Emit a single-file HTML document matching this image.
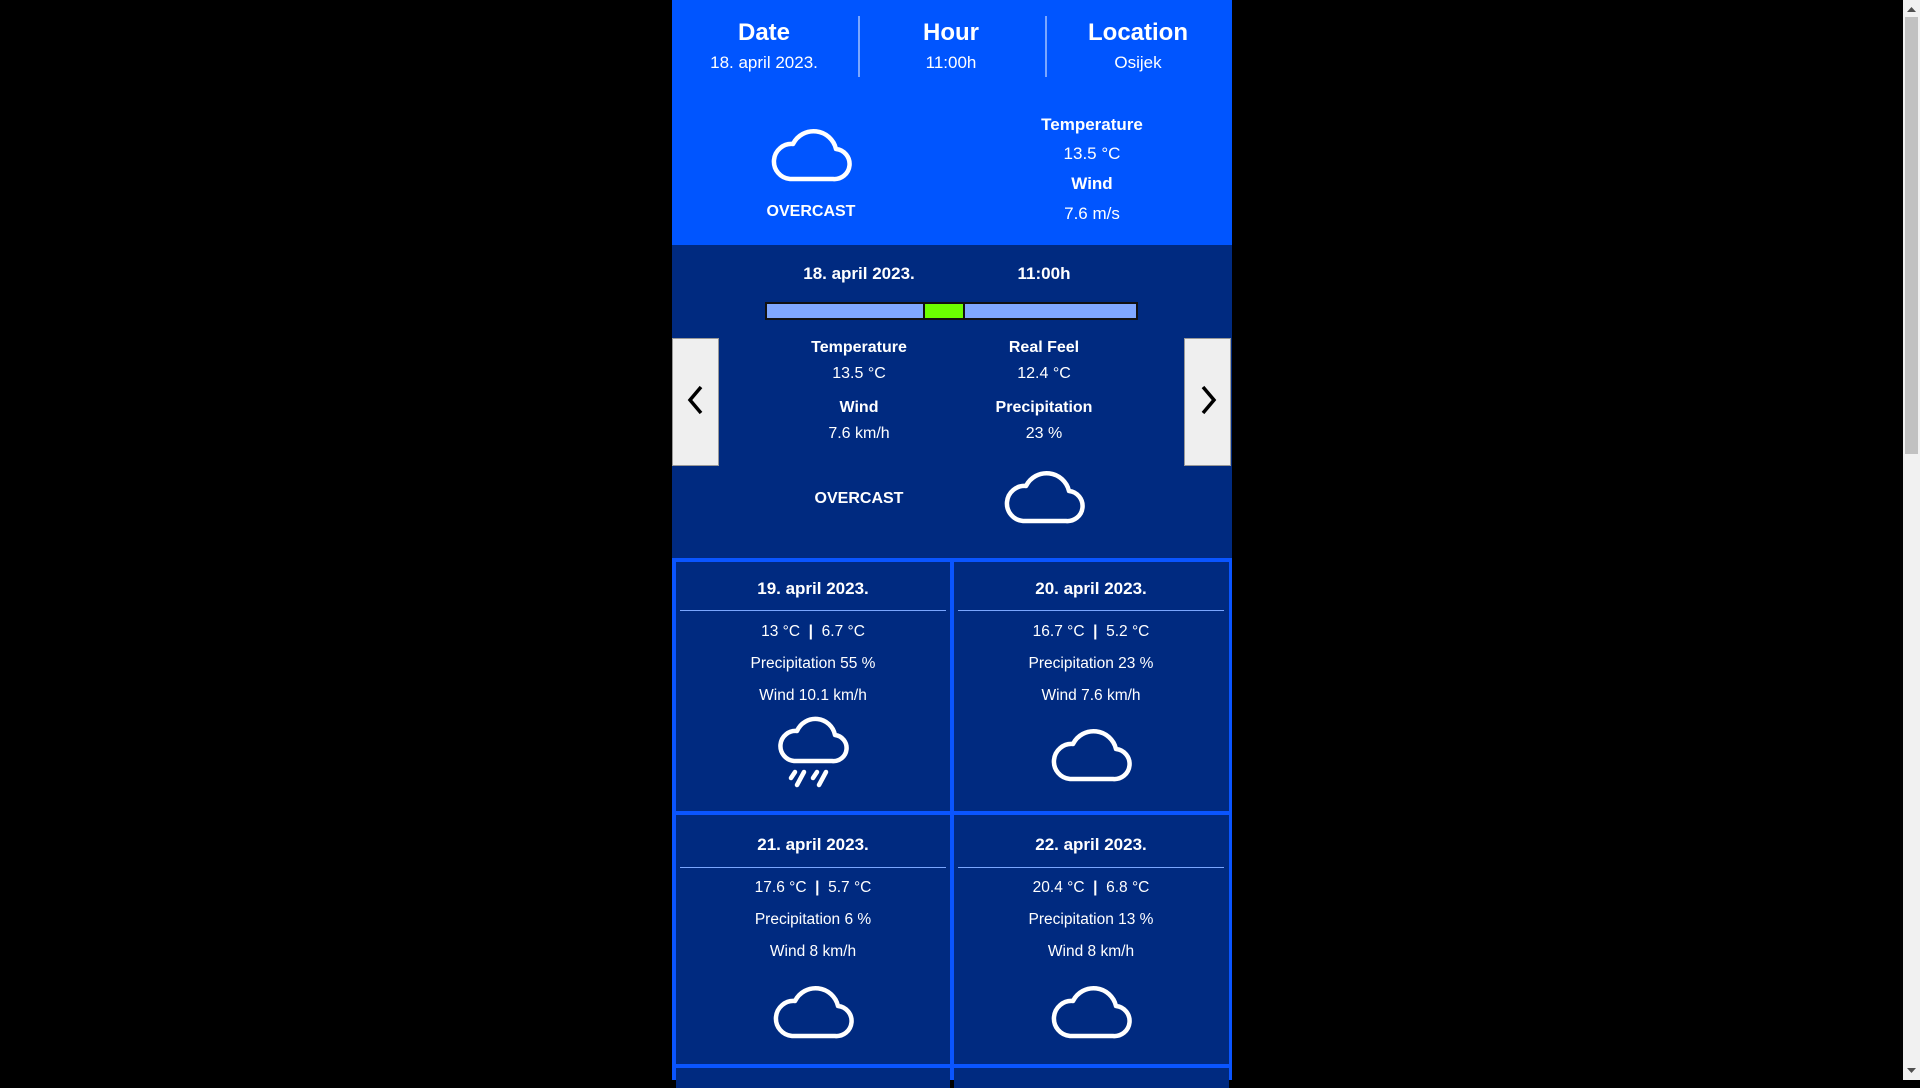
<!DOCTYPE html>
<html><head><meta charset="utf-8"><style>
*{margin:0;padding:0;box-sizing:border-box}
body{width:1920px;height:1080px;background:#000;font-family:"Liberation Sans",sans-serif;color:#fff;position:relative;overflow:hidden}
.a{position:absolute;text-align:center;white-space:nowrap;transform:translate(-50%,-50%)}
.b{font-weight:bold}
#top{position:absolute;left:672px;top:0;width:560px;height:245px;background:#0055ff}
#mid{position:absolute;left:672px;top:245px;width:560px;height:313px;background:#002a80}
#grid{position:absolute;left:672px;top:558px;width:560px;height:522px;background:#0a55ff}
.card{position:absolute;background:#002a80}
.line{position:absolute;height:1px;background:#7aa6ff}
.div{position:absolute;width:2px;background:#7aa6ff;top:16px;height:61px}
.btn{position:absolute;top:338px;width:47px;height:128px;background:#efefef;border:1px solid #999}
#sb{position:absolute;left:1903px;top:0;width:17px;height:1080px;background:#f1f1f1}
#th{position:absolute;left:1905px;top:17px;width:13px;height:437px;background:#c1c1c1}
.c{font-size:15.5px}
</style></head><body>
<div id="top">
<div class="div" style="left:186px"></div><div class="div" style="left:373px"></div>
</div>
<div id="mid"></div>
<div id="grid">
<div class="card" style="left:4px;top:4px;width:274px;height:249px"></div>
<div class="card" style="left:282px;top:4px;width:275px;height:249px"></div>
<div class="card" style="left:4px;top:257px;width:274px;height:249px"></div>
<div class="card" style="left:282px;top:257px;width:275px;height:249px"></div>
<div class="card" style="left:4px;top:510px;width:274px;height:20px"></div>
<div class="card" style="left:282px;top:510px;width:275px;height:20px"></div>
</div>
<div class="line" style="left:680px;top:610px;width:266px"></div>
<div class="line" style="left:958px;top:610px;width:266px"></div>
<div class="line" style="left:680px;top:867px;width:266px"></div>
<div class="line" style="left:958px;top:867px;width:266px"></div>

<div class="a b" style="left:764px;top:33px;font-size:24px">Date</div>
<div class="a" style="left:764px;top:63px;font-size:17px">18. april 2023.</div>
<div class="a b" style="left:951px;top:33px;font-size:24px">Hour</div>
<div class="a" style="left:951px;top:63px;font-size:17px">11:00h</div>
<div class="a b" style="left:1138px;top:33px;font-size:24px">Location</div>
<div class="a" style="left:1138px;top:63px;font-size:17px">Osijek</div>

<svg style="position:absolute;left:770px;top:125px" width="82" height="57" viewBox="0 0 82 57"><path d="M20 54H63A15 15 0 0 0 66 24A23 23 0 0 0 23 19A17 17 0 0 0 20 54Z" fill="none" stroke="#fff" stroke-width="4.5" stroke-linejoin="round"/></svg>
<div class="a b" style="left:811px;top:212px;font-size:16px">OVERCAST</div>
<div class="a b" style="left:1092px;top:125px;font-size:17px">Temperature</div>
<div class="a" style="left:1092px;top:154px;font-size:17px">13.5 °C</div>
<div class="a b" style="left:1092px;top:184px;font-size:17px">Wind</div>
<div class="a" style="left:1092px;top:214px;font-size:17px">7.6 m/s</div>

<div class="a b" style="left:859px;top:274px;font-size:17px">18. april 2023.</div>
<div class="a b" style="left:1044px;top:274px;font-size:17px">11:00h</div>
<div style="position:absolute;left:765px;top:302px;width:373px;height:18px;border:2px solid #111;background:#80a8ff"><div style="position:absolute;left:156px;top:0;width:42px;height:14px;background:#6cff00;border-left:2px solid #111;border-right:2px solid #111"></div></div>
<div class="btn" style="left:672px"></div><div class="btn" style="left:1184px"></div>
<svg style="position:absolute;left:686px;top:384px" width="20" height="32"><path d="M15 3L4 16L15 29" fill="none" stroke="#000" stroke-width="3.5"/></svg>
<svg style="position:absolute;left:1198px;top:384px" width="20" height="32"><path d="M5 3L16 16L5 29" fill="none" stroke="#000" stroke-width="3.5"/></svg>
<div class="a b" style="left:859px;top:348px;font-size:16px">Temperature</div>
<div class="a" style="left:859px;top:374px;font-size:16px">13.5 °C</div>
<div class="a b" style="left:1044px;top:348px;font-size:16px">Real Feel</div>
<div class="a" style="left:1044px;top:374px;font-size:16px">12.4 °C</div>
<div class="a b" style="left:859px;top:408px;font-size:16px">Wind</div>
<div class="a" style="left:859px;top:434px;font-size:16px">7.6 km/h</div>
<div class="a b" style="left:1044px;top:408px;font-size:16px">Precipitation</div>
<div class="a" style="left:1044px;top:434px;font-size:16px">23 %</div>
<div class="a b" style="left:859px;top:499px;font-size:16px">OVERCAST</div>
<svg style="position:absolute;left:1003px;top:467px" width="82" height="57" viewBox="0 0 82 57"><path d="M20 54H63A15 15 0 0 0 66 24A23 23 0 0 0 23 19A17 17 0 0 0 20 54Z" fill="none" stroke="#fff" stroke-width="4.5" stroke-linejoin="round"/></svg>

<div class="a b" style="left:813px;top:589px;font-size:17px">19. april 2023.</div>
<div class="a c" style="left:813px;top:632px">13 °C &nbsp;<b>|</b>&nbsp; 6.7 °C</div>
<div class="a c" style="left:813px;top:664px">Precipitation 55 %</div>
<div class="a c" style="left:813px;top:696px">Wind 10.1 km/h</div>
<svg style="position:absolute;left:776px;top:715px" width="76" height="80" viewBox="0 0 76 80"><path d="M18 46H56A13 13 0 0 0 59 20A20 20 0 0 0 21 16A15 15 0 0 0 18 46Z" fill="none" stroke="#fff" stroke-width="4.5" stroke-linejoin="round"/><path d="M19 57L15 63M28 57L21 70M41 57L37 63M50 57L43 70" stroke="#fff" stroke-width="4.5" stroke-linecap="round"/></svg>

<div class="a b" style="left:1091px;top:589px;font-size:17px">20. april 2023.</div>
<div class="a c" style="left:1091px;top:632px">16.7 °C &nbsp;<b>|</b>&nbsp; 5.2 °C</div>
<div class="a c" style="left:1091px;top:664px">Precipitation 23 %</div>
<div class="a c" style="left:1091px;top:696px">Wind 7.6 km/h</div>
<svg style="position:absolute;left:1050px;top:725px" width="82" height="57" viewBox="0 0 82 57"><path d="M20 54H63A15 15 0 0 0 66 24A23 23 0 0 0 23 19A17 17 0 0 0 20 54Z" fill="none" stroke="#fff" stroke-width="4.5" stroke-linejoin="round"/></svg>

<div class="a b" style="left:813px;top:845px;font-size:17px">21. april 2023.</div>
<div class="a c" style="left:813px;top:888px">17.6 °C &nbsp;<b>|</b>&nbsp; 5.7 °C</div>
<div class="a c" style="left:813px;top:920px">Precipitation 6 %</div>
<div class="a c" style="left:813px;top:952px">Wind 8 km/h</div>
<svg style="position:absolute;left:772px;top:982px" width="82" height="57" viewBox="0 0 82 57"><path d="M20 54H63A15 15 0 0 0 66 24A23 23 0 0 0 23 19A17 17 0 0 0 20 54Z" fill="none" stroke="#fff" stroke-width="4.5" stroke-linejoin="round"/></svg>

<div class="a b" style="left:1091px;top:845px;font-size:17px">22. april 2023.</div>
<div class="a c" style="left:1091px;top:888px">20.4 °C &nbsp;<b>|</b>&nbsp; 6.8 °C</div>
<div class="a c" style="left:1091px;top:920px">Precipitation 13 %</div>
<div class="a c" style="left:1091px;top:952px">Wind 8 km/h</div>
<svg style="position:absolute;left:1050px;top:982px" width="82" height="57" viewBox="0 0 82 57"><path d="M20 54H63A15 15 0 0 0 66 24A23 23 0 0 0 23 19A17 17 0 0 0 20 54Z" fill="none" stroke="#fff" stroke-width="4.5" stroke-linejoin="round"/></svg>

<div id="sb"></div><div id="th"></div>
<svg style="position:absolute;left:1905px;top:4px" width="13" height="10"><path d="M2 8L6.5 3L11 8Z" fill="#505050"/></svg>
<svg style="position:absolute;left:1905px;top:1066px" width="13" height="10"><path d="M2 2L6.5 7L11 2Z" fill="#505050"/></svg>
</body></html>
